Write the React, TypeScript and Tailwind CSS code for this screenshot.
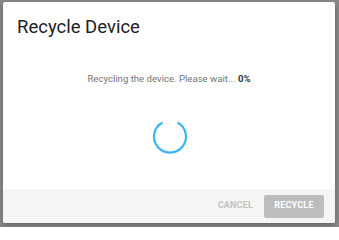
import React from "react";

export default function App() {
  return (
    <div className="w-[339px] h-[227px] bg-[#8a8a8a] pt-[2px] pl-[3px] overflow-hidden" style={{ fontFamily: "Roboto, 'Liberation Sans', sans-serif" }}>
      <div className="w-[332px] h-[221px] bg-white rounded-[2px] flex flex-col overflow-hidden shadow-[0_2px_6px_rgba(0,0,0,0.3)]">
        <div className="pt-[12px] pl-[14px] text-[18.5px] leading-[26px] text-[#212121]">Recycle Device</div>
        <div className="flex flex-col items-center flex-1">
          <div className="mt-[31px] text-[9.6px] leading-[16px] text-[#757575]">
            Recycling the device. Please wait... <span className="font-bold text-[#333333]">0%</span>
          </div>
          <div className="mt-[30px] ml-[2px]">
            <svg width="38" height="38" viewBox="0 0 38 38">
              <path
                d="M 11.5 5.5 A 16 16 0 1 0 26.5 5.5"
                fill="none"
                stroke="#3bb6f2"
                strokeWidth="2.2"
                strokeLinecap="butt"
              />
            </svg>
          </div>
        </div>
        <div className="h-[34px] bg-[#f5f5f5] flex items-center justify-end pr-[11px] gap-[11px]">
          <button className="text-[9px] font-bold text-[#c2c2c2] tracking-[0.2px]">CANCEL</button>
          <button className="w-[60px] h-[23px] rounded-[2px] bg-[#bdbdbd] text-white text-[9px] font-bold tracking-[0.2px]">RECYCLE</button>
        </div>
      </div>
    </div>
  );
}
